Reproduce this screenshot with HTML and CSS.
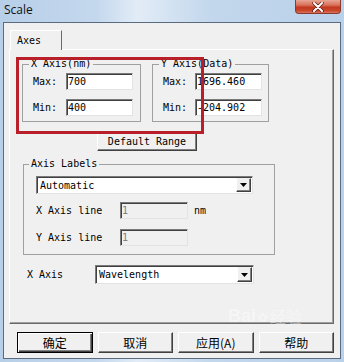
FILE: index.html
```html
<!DOCTYPE html>
<html>
<head>
    <title>Scale</title>
    <link rel="stylesheet" href="styles.css">
</head>
<body>
    <div class="window">
        <!-- Title bar -->
        <div class="titlebar">
            <span class="title">Scale</span>
            <div class="close">
                <svg width="12" height="10" viewBox="0 0 12 10">
                    <path d="M2 1 L10 9 M10 1 L2 9" stroke="#5a1a12" stroke-width="3.4" stroke-linecap="round"/>
                    <path d="M2 1 L10 9 M10 1 L2 9" stroke="#fff" stroke-width="2" stroke-linecap="round"/>
                </svg>
            </div>
        </div>

        <div class="client">
            <div class="tabs">
                <div class="tab">Axes</div>
            </div>

            <div class="tab-page">
                <div class="range-row">
                    <fieldset class="group group-x">
                        <legend>X Axis(nm)</legend>
                        <div class="field"><span>Max:</span><div class="edit">700</div></div>
                        <div class="field"><span>Min:</span><div class="edit">400</div></div>
                    </fieldset>
                    <fieldset class="group group-y">
                        <legend>Y Axis(Data)</legend>
                        <div class="field"><span>Max:</span><div class="edit">1696.460</div></div>
                        <div class="field"><span>Min:</span><div class="edit">-204.902</div></div>
                    </fieldset>
                </div>

                <div class="btn btn-range">Default Range</div>

                <fieldset class="group group-labels">
                    <legend>Axis Labels</legend>
                    <div class="combo combo-labels">
                        <div class="combo-text">Automatic</div>
                        <div class="combo-btn"><svg width="7" height="4" viewBox="0 0 7 4"><path d="M0 0 H7 L3.5 4 Z" fill="#000"/></svg></div>
                    </div>
                    <div class="line-row">
                        <span>X Axis line</span>
                        <div class="edit edit-off">1</div>
                        <span class="unit">nm</span>
                    </div>
                    <div class="line-row line-row-y">
                        <span>Y Axis line</span>
                        <div class="edit edit-off">1</div>
                    </div>
                </fieldset>

                <div class="xaxis-row">
                    <span>X Axis</span>
                    <div class="combo combo-xaxis">
                        <div class="combo-text">Wavelength</div>
                        <div class="combo-btn"><svg width="7" height="4" viewBox="0 0 7 4"><path d="M0 0 H7 L3.5 4 Z" fill="#000"/></svg></div>
                    </div>
                </div>

                <!-- red marker drawn over the screenshot -->
                <div class="marker"></div>
            </div>

            <div class="buttons">
                <div class="btn btn-dialog btn-default">确定</div>
                <div class="btn btn-dialog">取消</div>
                <div class="btn btn-dialog">应用(A)</div>
                <div class="btn btn-dialog">帮助</div>
            </div>
        </div>

        <div class="watermark"><span class="wm-latin">Bai</span><span class="wm-paw">&#10047;</span><span class="wm-cjk">经验</span></div>
    </div>
</body>
</html>
```

FILE: styles.css
```css
body {
    margin: 0;
    width: 344px;
    height: 362px;
    overflow: hidden;
    font-family: "DejaVu Sans Mono", "Liberation Mono", monospace;
    font-size: 10px;
    color: #000;
}
.window {
    position: relative;
    height: 362px;
    box-sizing: border-box;
    padding: 0 3px 3px;
    display: flex;
    flex-direction: column;
    background: linear-gradient(90deg, #b7cfe8 0%, #c4d8ed 28%, #e2ecf7 40%, #d3e2f2 50%, #c2d7ec 62%, #bad1ea 100%);
}
.titlebar {
    height: 22px;
    display: flex;
    justify-content: space-between;
    align-items: flex-start;
}
.title {
    font-family: "Open Sans", "Noto Sans", sans-serif;
    font-size: 12px;
    line-height: 20px;
    padding-left: 1px;
    color: #111;
}
.close {
    width: 46px;
    height: 14px;
    box-sizing: border-box;
    border: 1px solid #8a3a2e;
    border-top: none;
    border-radius: 0 0 4px 4px;
    background: linear-gradient(#e9a695 0%, #d8705a 40%, #c2391f 55%, #c9452a 80%, #d9735c 100%);
    display: flex;
    justify-content: center;
    align-items: center;
}
.client {
    flex: 1;
    border: 1px solid #5b6b7f;
    background: #f0f0f0;
    padding: 7px 6px 5px 5px;
    display: flex;
    flex-direction: column;
}
.tabs {
    display: flex;
    padding-left: 1px;
    height: 20px;
    margin-bottom: -1px;
    position: relative;
    z-index: 1;
}
.tab {
    width: 52px;
    box-sizing: border-box;
    border: 1px solid;
    border-color: #fff #696969 transparent #fff;
    border-bottom: none;
    background: #f0f0f0;
    padding: 2px 0 0 6px;
    line-height: 16px;
}
.tab-page {
    position: relative;
    height: 275px;
    box-sizing: border-box;
    border: 1px solid;
    border-color: #fff #696969 #696969 #fff;
    box-shadow: inset -1px -1px #a0a0a0;
    padding: 8px 0 0 12px;
}
.range-row {
    display: flex;
    gap: 11px;
}
.group {
    margin: 0;
    padding: 3px 6px 5px;
    border: 1px solid #a0a0a0;
    min-width: 0;
    box-sizing: border-box;
}
.group legend {
    padding: 0 2px;
    line-height: 12px;
}
.group-x {
    width: 119px;
}
.group-y {
    width: 117px;
}
.field {
    display: grid;
    grid-template-columns: 33px 67px;
    align-items: center;
    padding-left: 4px;
    height: 17px;
}
.group-y .field {
    grid-template-columns: 32px 67px;
}
.field + .field {
    margin-top: 9px;
}
.edit {
    height: 17px;
    box-sizing: border-box;
    border: 1px solid;
    border-color: #7a7a7a #e3e3e3 #e3e3e3 #7a7a7a;
    box-shadow: inset 1px 1px #404040;
    background: #fff;
    padding-left: 1px;
    line-height: 15px;
    white-space: nowrap;
    overflow: hidden;
}
.edit-off {
    width: 68px;
    background: #f0f0f0;
    color: #808080;
}
.btn {
    box-sizing: border-box;
    border: 1px solid;
    border-color: #fff #404040 #404040 #fff;
    box-shadow: inset -1px -1px #808080;
    background: #f0f0f0;
    display: flex;
    justify-content: center;
    align-items: center;
}
.btn-range {
    width: 100px;
    height: 19px;
    margin: 10px 0 0 75px;
}
.group-labels {
    width: 252px;
    margin: 7px 0 0 1px;
    padding: 6px 0 8px 5px;
}
.combo {
    display: flex;
    box-sizing: border-box;
    border: 1px solid;
    border-color: #7a7a7a #e3e3e3 #e3e3e3 #7a7a7a;
    box-shadow: inset 1px 1px #404040;
    background: #fff;
    padding: 1px 1px 1px 2px;
}
.combo-labels {
    width: 217px;
    height: 18px;
    margin-left: 7px;
}
.combo-xaxis {
    width: 159px;
    height: 19px;
}
.combo-text {
    flex: 1;
    padding-left: 1px;
    line-height: 15px;
}
.combo-btn {
    width: 15px;
    box-sizing: border-box;
    border: 1px solid;
    border-color: #f0f0f0 #404040 #404040 #fff;
    box-shadow: inset -1px -1px #808080;
    background: #f0f0f0;
    display: flex;
    justify-content: center;
    align-items: center;
}
.line-row {
    display: grid;
    grid-template-columns: 84px 68px auto;
    align-items: center;
    margin: 8px 0 0 7px;
}
.line-row-y {
    margin-top: 10px;
}
.unit {
    margin-left: 6px;
}
.xaxis-row {
    display: grid;
    grid-template-columns: 68px 159px;
    align-items: center;
    margin: 10px 0 0 5px;
}
.marker {
    position: absolute;
    left: 6px;
    top: 7px;
    width: 188px;
    height: 77px;
    box-sizing: border-box;
    border: 3px solid #b91f28;
}
.buttons {
    display: flex;
    gap: 5px;
    margin-top: 8px;
    padding-left: 8px;
}
.btn-dialog {
    width: 76px;
    height: 21px;
    font-family: "Noto Sans CJK SC", sans-serif;
    font-size: 12px;
}
.btn-default {
    border-color: #000;
    box-shadow: inset 1px 1px #fff, inset -1px -1px #404040, inset -2px -2px #808080;
}
.watermark {
    position: absolute;
    left: 228px;
    top: 304px;
    display: flex;
    align-items: center;
    color: #fff;
    opacity: 0.4;
}
.wm-latin {
    font-family: "Liberation Sans", sans-serif;
    font-size: 18px;
    font-weight: bold;
}
.wm-paw {
    font-size: 16px;
    margin: 0 2px;
}
.wm-cjk {
    font-family: "Noto Sans CJK SC", sans-serif;
    font-size: 16px;
}
```
